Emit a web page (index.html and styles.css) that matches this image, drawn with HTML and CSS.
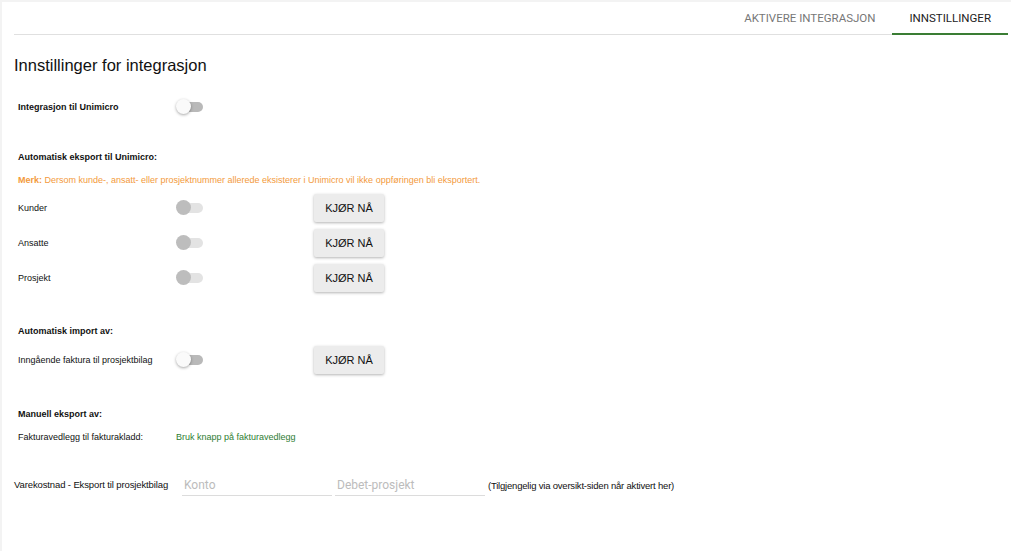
FILE: index.html
```html
<!DOCTYPE html>
<html lang="no">

<head>
    <meta charset="UTF-8">
    <title>Innstillinger for integrasjon</title>
    <link rel="stylesheet" href="styles.css">
</head>

<body>
    <div class="card">
        <div class="tabs">
            <div class="tab">AKTIVERE INTEGRASJON</div>
            <div class="tab active">INNSTILLINGER</div>
        </div>

        <div class="content">
            <h2>Innstillinger for integrasjon</h2>

            <div class="row first">
                <div class="label bold">Integrasjon til Unimicro</div>
                <div class="cell"><span class="toggle"></span></div>
            </div>

            <div class="section-head">Automatisk eksport til Unimicro:</div>
            <div class="note"><b>Merk:</b> Dersom kunde-, ansatt- eller prosjektnummer allerede eksisterer i Unimicro vil ikke oppføringen bli eksportert.</div>

            <div class="rows">
                <div class="row">
                    <div class="label">Kunder</div>
                    <div class="cell"><span class="toggle disabled"></span></div>
                    <button class="run-btn">KJØR NÅ</button>
                </div>
                <div class="row">
                    <div class="label">Ansatte</div>
                    <div class="cell"><span class="toggle disabled"></span></div>
                    <button class="run-btn">KJØR NÅ</button>
                </div>
                <div class="row">
                    <div class="label">Prosjekt</div>
                    <div class="cell"><span class="toggle disabled"></span></div>
                    <button class="run-btn">KJØR NÅ</button>
                </div>
            </div>

            <div class="section-head import">Automatisk import av:</div>
            <div class="row single">
                <div class="label">Inngående faktura til prosjektbilag</div>
                <div class="cell"><span class="toggle"></span></div>
                <button class="run-btn">KJØR NÅ</button>
            </div>

            <div class="section-head manual">Manuell eksport av:</div>
            <div class="line">
                <div class="label">Fakturavedlegg til fakturakladd:</div>
                <div class="hint-green">Bruk knapp på fakturavedlegg</div>
            </div>

            <div class="cost-row">
                <div class="cost-label">Varekostnad - Eksport til prosjektbilag</div>
                <input class="field" type="text" placeholder="Konto">
                <input class="field" type="text" placeholder="Debet-prosjekt">
                <div class="cost-hint">(Tilgjengelig via oversikt-siden når aktivert her)</div>
            </div>
        </div>
    </div>
</body>

</html>
```

FILE: styles.css
```css
body {
    margin: 0;
    padding: 2px 0 0 2px;
    background-color: #f3f3f3;
    font-family: "Liberation Sans", Arial, sans-serif;
    color: #111;
}

.card {
    background: white;
    height: 549px;
    padding: 0 3px 0 12px;
}

.tabs {
    display: flex;
    justify-content: flex-end;
    height: 32px;
    border-bottom: 1px solid #e0e0e0;
}

.tab {
    display: flex;
    align-items: center;
    justify-content: center;
    padding: 0 17px;
    font-family: Roboto, "Liberation Sans", sans-serif;
    font-size: 11.5px;
    color: #777;
    border-bottom: 2px solid transparent;
    margin-bottom: -1px;
}

.tab.active {
    color: #222;
    border-bottom-color: #3a7d34;
}

h2 {
    font-weight: normal;
    font-size: 16.5px;
    line-height: 24px;
    margin: 18px 0 0 0;
    color: #111;
}

.row {
    display: flex;
    align-items: center;
    height: 35px;
    padding-left: 4px;
}

.row.first {
    margin-top: 12px;
}

.label {
    width: 158px;
    font-size: 9px;
}

.bold {
    font-weight: bold;
}

.cell {
    width: 138px;
    display: flex;
    align-items: center;
}

.toggle {
    position: relative;
    display: inline-block;
    width: 24px;
    height: 10px;
    margin-left: 3px;
    border-radius: 5px;
    background: #b9b9b9;
}

.toggle::after {
    content: "";
    position: absolute;
    left: -3px;
    top: -3px;
    width: 15px;
    height: 15px;
    border-radius: 50%;
    background: #fafafa;
    box-shadow: 0 1px 3px rgba(0, 0, 0, 0.35);
}

.toggle.disabled {
    background: #e3e3e3;
}

.toggle.disabled::after {
    background: #bdbdbd;
    box-shadow: none;
}

.section-head {
    font-size: 9px;
    font-weight: bold;
    line-height: 16px;
    padding-left: 4px;
    margin-top: 25px;
}

.section-head.import {
    margin-top: 28px;
}

.section-head.manual {
    margin-top: 29px;
}

.note {
    font-size: 9px;
    line-height: 16px;
    padding-left: 4px;
    margin-top: 7px;
    color: #f39a3c;
}

.rows {
    margin-top: 2px;
}

.row.single {
    margin-top: 3px;
}

.run-btn {
    width: 70px;
    height: 28px;
    border: none;
    border-radius: 2px;
    background: #ececec;
    box-shadow: 0 1px 3px rgba(0, 0, 0, 0.3);
    font-family: "Liberation Sans", Arial, sans-serif;
    font-size: 11px;
    color: #111;
    padding: 0;
}

.line {
    display: flex;
    align-items: center;
    height: 16px;
    margin-top: 7px;
    padding-left: 4px;
}

.hint-green {
    font-size: 9px;
    color: #2e7d32;
}

.cost-row {
    display: flex;
    align-items: center;
    height: 30px;
    margin-top: 24px;
}

.cost-label {
    width: 168px;
    font-size: 9.5px;
    letter-spacing: -0.12px;
}

.field {
    width: 150px;
    height: 24px;
    margin-right: 3px;
    border: none;
    border-bottom: 1px solid #dcdcdc;
    padding: 2px 0 0 2px;
    box-sizing: border-box;
    font-family: Roboto, "Liberation Sans", sans-serif;
    font-size: 12px;
    outline: none;
}

.field::placeholder {
    color: #bcbcbc;
}

.cost-hint {
    font-size: 9.5px;
    letter-spacing: -0.2px;
    padding-top: 2px;
}
```
